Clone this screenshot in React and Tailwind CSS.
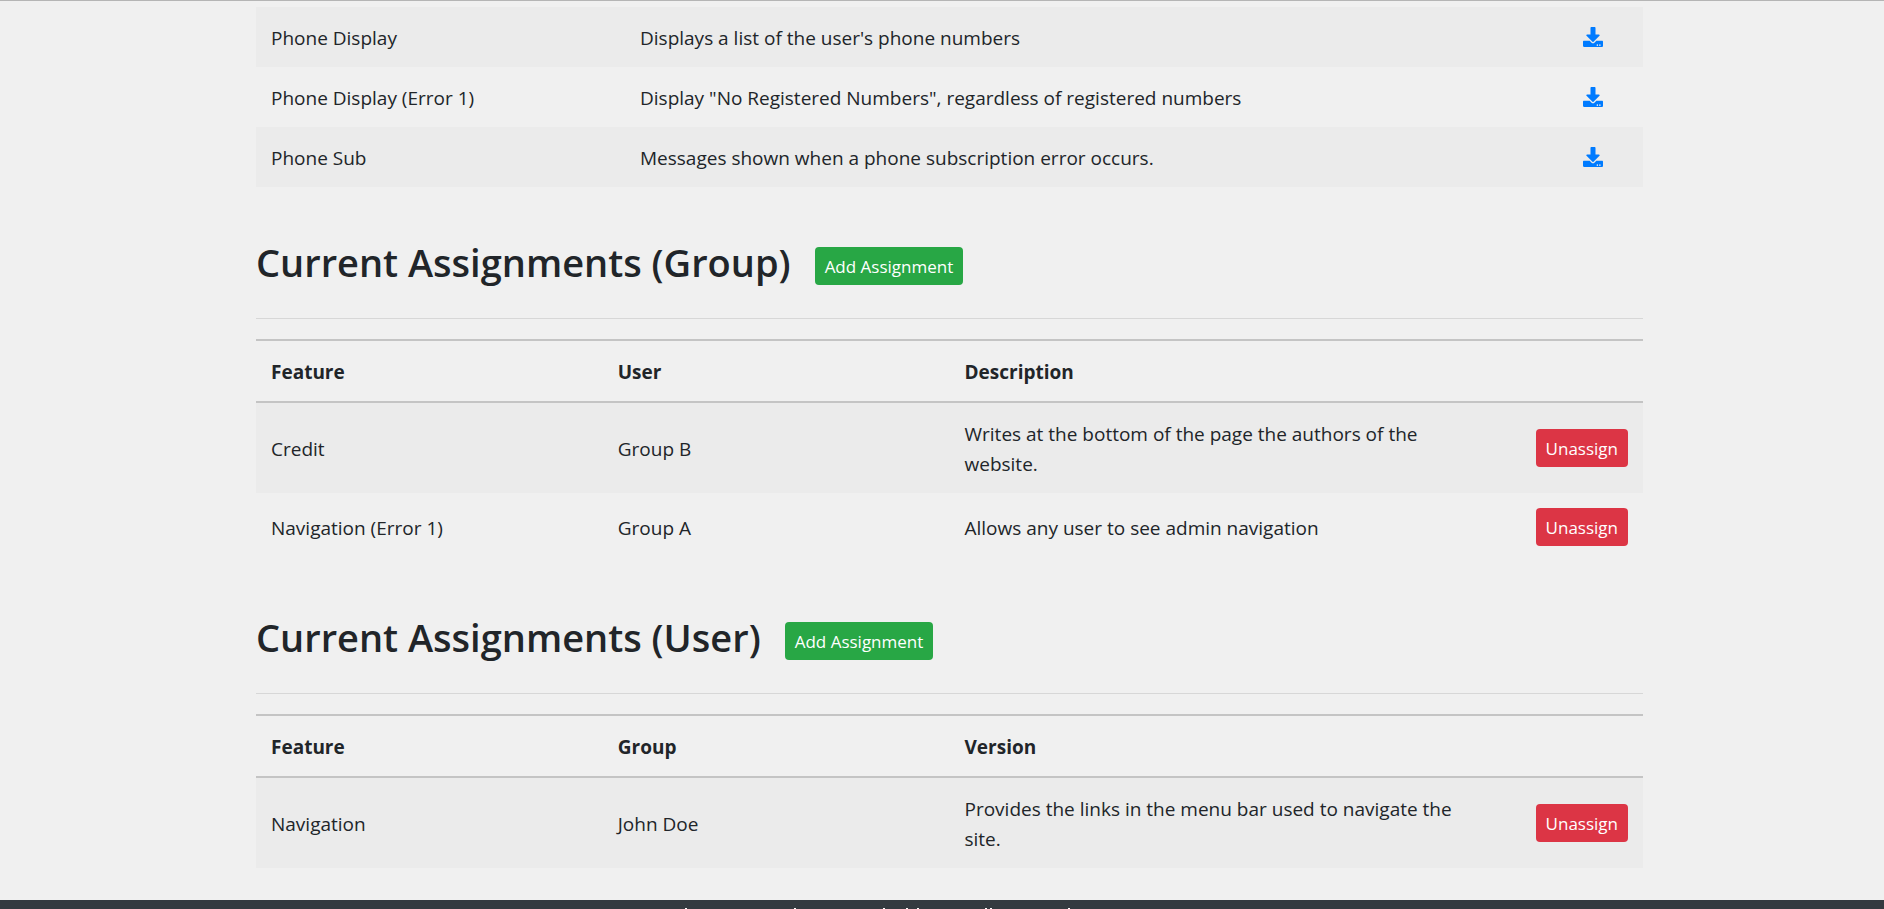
import { FaDownload } from "react-icons/fa";

const downloads = [
  ["Phone Display", "Displays a list of the user's phone numbers"],
  ["Phone Display (Error 1)", 'Display "No Registered Numbers", regardless of registered numbers'],
  ["Phone Sub", "Messages shown when a phone subscription error occurs."],
];

const groupRows = [
  ["Credit", "Group B", "Writes at the bottom of the page the authors of the website."],
  ["Navigation (Error 1)", "Group A", "Allows any user to see admin navigation"],
];

const userRows = [
  ["Navigation", "John Doe", "Provides the links in the menu bar used to navigate the site."],
];

function Assignments({ title, headings, rows }) {
  return (
    <section className="mt-12 pb-px">
      <div className="flex items-start gap-6">
        <h2 className="text-[38px] leading-[54px] font-semibold">{title}</h2>
        <button type="button" className="mt-3 h-[38px] rounded bg-[#28a745] px-2.5 pt-0.5 text-[17px] text-white">
          Add Assignment
        </button>
      </div>
      <hr className="mt-[29px] mb-5 border-t border-[#d7d7d7]" />
      <table className="w-full table-fixed border-collapse text-left">
        <thead>
          <tr className="border-y-2 border-[#c4c4c4]">
            <th className="w-[25%] px-[15px] pt-4 pb-3.5 font-bold">{headings[0]}</th>
            <th className="w-[25%] px-[15px] pt-4 pb-3.5 font-bold">{headings[1]}</th>
            <th className="w-[39%] px-[15px] pt-4 pb-3.5 font-bold">{headings[2]}</th>
            <td className="w-[11%]"></td>
          </tr>
        </thead>
        <tbody>
          {rows.map((row) => (
            <tr key={row[0]} className="odd:bg-[#ebebeb]">
              {row.map((cell) => (
                <td key={cell} className="px-[15px] pt-4 pb-3.5">{cell}</td>
              ))}
              <td className="p-[15px]">
                <button type="button" className="ml-auto block h-[38px] rounded bg-[#dc3545] px-2.5 pt-0.5 text-[17px] text-white">
                  Unassign
                </button>
              </td>
            </tr>
          ))}
        </tbody>
      </table>
    </section>
  );
}

export default function App() {
  return (
    <div className="flex min-h-screen flex-col border-t border-[#b5b5b5] bg-[#f0f0f0] font-['Open_Sans',sans-serif] text-[19px] leading-[30px] text-[#212529]">
      <div className="pl-[15px]">
        <main className="mx-auto w-full max-w-[1387px] pt-1.5 pb-[31px]">
          <table className="w-full table-fixed border-collapse">
            <tbody>
              {downloads.map(([name, description]) => (
                <tr key={name} className="odd:bg-[#ebebeb]">
                  <td className="w-[369px] px-[15px] pt-4 pb-3.5">{name}</td>
                  <td className="px-[15px] pt-4 pb-3.5">{description}</td>
                  <td className="w-[100px] p-[15px]">
                    <a href="#download" aria-label={"Download " + name} className="flex justify-center text-[#007bff]">
                      <FaDownload size={20} />
                    </a>
                  </td>
                </tr>
              ))}
            </tbody>
          </table>
          <Assignments title="Current Assignments (Group)" headings={["Feature", "User", "Description"]} rows={groupRows} />
          <Assignments title="Current Assignments (User)" headings={["Feature", "Group", "Version"]} rows={userRows} />
        </main>
      </div>
      <footer className="grow bg-[#343a40] pl-[15px]">
        <svg className="mx-auto block w-full max-w-[1387px]" height="9" shapeRendering="crispEdges" aria-hidden="true">
          <path d="M429 8h2v1h-2zM538 8h2v1h-2zM627 8h2v1h-2zM650 8h2v1h-2zM661 8h2v1h-2zM729 8h2v1h-2zM734 8h2v1h-2zM812 8h2v1h-2z" fill="#ffffff" />
        </svg>
      </footer>
    </div>
  );
}
